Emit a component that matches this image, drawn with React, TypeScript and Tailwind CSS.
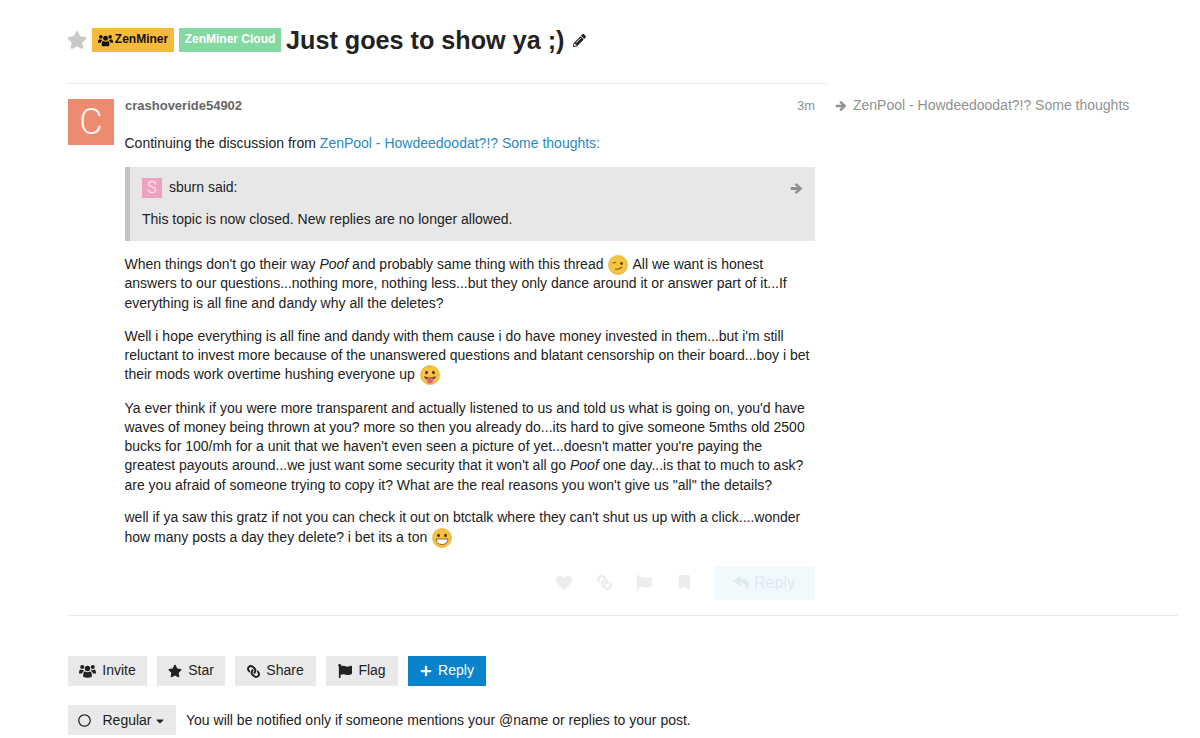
import { FaStar, FaPencilAlt, FaHeart, FaLink, FaFlag, FaBookmark, FaReply, FaPlus, FaRegCircle, FaCaretDown } from "react-icons/fa";
import type { ReactNode } from "react";

function Face({ tongue, wink, grin }: { tongue?: boolean; wink?: boolean; grin?: boolean }) {
  return (
    <svg viewBox="0 0 20 20" className="inline-block w-5 h-5 -my-1 align-[-2px] mx-[1px]">
      <circle cx="10" cy="10" r="9.5" fill="#f5c242" stroke="#d9a22c" strokeWidth="0.6" />
      {wink ? (
        <>
          <path d="M4.5 8 L8 7.5" stroke="#7a5a1e" strokeWidth="1.2" />
          <circle cx="13.5" cy="8.5" r="1.4" fill="#5a4316" />
          <path d="M7 14 Q11 15 14 12" stroke="#8a5a1e" strokeWidth="1.2" fill="none" />
        </>
      ) : (
        <>
          <ellipse cx="6.5" cy="7.5" rx="1.4" ry="1.8" fill="#4a3512" />
          <ellipse cx="13.5" cy="7.5" rx="1.4" ry="1.8" fill="#4a3512" />
        </>
      )}
      {tongue && (
        <>
          <path d="M4 11 Q10 14 16 11 Q15 15 10 15 Q5 15 4 11Z" fill="#5a3312" />
          <path d="M7 13 H13 V15.5 A3 3 0 0 1 7 15.5Z" fill="#e0607e" />
        </>
      )}
      {grin && (
        <path d="M4 11 H16 Q15.5 16.5 10 16.5 Q4.5 16.5 4 11Z" fill="#fff" stroke="#6b4a18" strokeWidth="0.8" />
      )}
    </svg>
  );
}

function UsersIcon({ className }: { className: string }) {
  return (
    <svg viewBox="0 0 20 16" className={className} fill="currentColor">
      <circle cx="10" cy="5" r="3.2" />
      <circle cx="3.8" cy="3.2" r="2.4" />
      <circle cx="16.2" cy="3.2" r="2.4" />
      <path d="M5 15.2 Q4.5 8.8 7 8.6 Q10 10.4 13 8.6 Q15.5 8.8 15 15.2 Q10 16.4 5 15.2Z" />
      <path d="M0 11 Q0 6.2 2 6.2 Q3.8 7.4 5.6 6.6 Q5.4 7.4 5.6 8 Q3.8 8.6 3.7 11Z" />
      <path d="M20 11 Q20 6.2 18 6.2 Q16.2 7.4 14.4 6.6 Q14.6 7.4 14.4 8 Q16.2 8.6 16.3 11Z" />
    </svg>
  );
}

function ArrowIcon({ className }: { className: string }) {
  return (
    <svg viewBox="0 0 14 14" className={className} fill="currentColor">
      <path d="M7 1 L13.4 7 L7 13 L5 11 L7.8 8.6 H0.8 V5.4 H7.8 L5 3 Z" />
    </svg>
  );
}

function Btn({ icon, label, className }: { icon: ReactNode; label: string; className: string }) {
  return (
    <button className={`h-[30px] flex items-center justify-center gap-[6px] text-[14px] ${className}`}>
      {icon}
      <span>{label}</span>
    </button>
  );
}

export default function App() {
  return (
    <div className="h-[738px] overflow-hidden bg-white pl-[68px] pr-[22px] pt-[25px] text-[14px] leading-[19.6px] text-[#222222] font-['Liberation_Sans',Arial,sans-serif]">
      <div className="flex items-center h-[30px] w-[759px]">
        <FaStar className="text-[#c9c9c9] text-[20px] ml-[-1px] mr-[5px]" />
        <span className="h-[24px] w-[82px] bg-[#f7bb3c] flex items-center justify-center gap-[2px] text-[12px] font-bold text-[#111111]">
          <UsersIcon className="w-[15px] h-[13px]" />
          ZenMiner
        </span>
        <span className="h-[24px] w-[102px] ml-[5px] bg-[#83d99f] flex items-center justify-center text-[12px] font-bold text-white">
          ZenMiner Cloud
        </span>
        <h1 className="ml-[5px] text-[25.2px] font-bold leading-[30px] text-[#222222]">Just goes to show ya ;)</h1>
        <FaPencilAlt className="ml-[8px] text-[13px] text-[#222222]" />
      </div>

      <div className="mt-[28px] w-[759px] border-t border-[#e9e9e9]" />

      <div className="flex mt-[15px] w-[1110px] border-b border-[#e9e9e9] h-[517px]">
        <div className="w-[46px] h-[46px] bg-[#ee8a70] text-[#fdf3ee] text-[36px] leading-[46px] text-center shrink-0 font-['Roboto',sans-serif] font-light">C</div>
        <div className="ml-[11px] w-[690px]">
          <div className="flex justify-between items-center h-[14px]">
            <span className="font-bold text-[#666666] text-[13px]">crashoveride54902</span>
            <span className="text-[13px] text-[#919191]">3m</span>
          </div>
          <p className="mt-[21px] -ml-[0.5px]">
            Continuing the discussion from <a className="text-[#2a8ac2]">ZenPool - Howdeedoodat?!? Some thoughts:</a>
          </p>
          <div className="mt-[13px] h-[74px] bg-[#e7e7e7] border-l-[5px] border-[#c4c4c4] pl-[12px] pr-[12px] pt-[11px]">
            <div className="flex items-center h-[20px]">
              <span className="w-[20px] h-[20px] bg-[#eea2c1] text-[#fdf3f6] text-[16px] leading-[20px] text-center font-['Roboto',sans-serif] font-light">S</span>
              <span className="ml-[7px] mt-[1px]">sburn said:</span>
              <ArrowIcon className="ml-auto text-[#8f8f8f] w-[13px] h-[13px] mt-[1px]" />
            </div>
            <p className="mt-[12px]">This topic is now closed. New replies are no longer allowed.</p>
          </div>
          <p className="mt-[14.5px] -ml-[0.5px] leading-[19.25px]">
            When things don't go their way <em>Poof</em> and probably same thing with this thread <Face wink /> All we want is honest answers to our questions...nothing more, nothing less...but they only dance around it or answer part of it...If everything is all fine and dandy why all the deletes?
          </p>
          <p className="mt-[14px] -ml-[0.5px] leading-[19.25px]">
            Well i hope everything is all fine and dandy with them cause i do have money invested in them...but i'm still reluctant to invest more because of the unanswered questions and blatant censorship on their board...boy i bet their mods work overtime hushing everyone up <Face tongue />
          </p>
          <p className="mt-[14px] -ml-[0.5px] leading-[19.25px]">
            Ya ever think if you were more transparent and actually listened to us and told us what is going on, you'd have waves of money being thrown at you? more so then you already do...its hard to give someone 5mths old 2500 bucks for 100/mh for a unit that we haven't even seen a picture of yet...doesn't matter you're paying the greatest payouts around...we just want some security that it won't all go <em>Poof</em> one day...is that to much to ask? are you afraid of someone trying to copy it? What are the real reasons you won't give us "all" the details?
          </p>
          <p className="mt-[13.5px] -ml-[0.5px] leading-[19.25px]">
            well if ya saw this gratz if not you can check it out on btctalk where they can't shut us up with a click....wonder how many posts a day they delete? i bet its a ton <Face grin />
          </p>
          <div className="mt-[19px] flex items-center justify-end h-[34px] text-[#ececec] text-[15px]">
            <FaHeart className="mr-[25px] text-[16px]" />
            <FaLink className="mr-[24px] -scale-x-100" />
            <FaFlag className="mr-[25px] text-[16px]" />
            <FaBookmark className="mr-[22px] text-[15px]" />
            <span className="w-[101px] h-[34px] bg-[#f2f9fd] flex items-center justify-center gap-[5px] text-[#dbe9f3] text-[16px]">
              <FaReply className="text-[15px]" />
              Reply
            </span>
          </div>
        </div>
        <div className="ml-[20px] -mt-[3px] flex items-start gap-[6px] text-[#919191]">
          <ArrowIcon className="w-[12px] h-[12px] mt-[4px]" />
          <span>ZenPool - Howdeedoodat?!? Some thoughts</span>
        </div>
      </div>

      <div className="mt-[40px] flex gap-[10px]">
        <Btn icon={<UsersIcon className="w-[17px] h-[14px]" />} label="Invite" className="w-[79px] bg-[#e9e9e9] text-[#222222]" />
        <Btn icon={<FaStar className="text-[14px]" />} label="Star" className="w-[68px] bg-[#e9e9e9] text-[#222222]" />
        <Btn icon={<FaLink className="text-[13px] -scale-x-100" />} label="Share" className="w-[81px] bg-[#e9e9e9] text-[#222222]" />
        <Btn icon={<FaFlag className="text-[14px]" />} label="Flag" className="w-[72px] bg-[#e9e9e9] text-[#222222]" />
        <Btn icon={<FaPlus className="text-[12px]" />} label="Reply" className="w-[78px] bg-[#0a83cc] text-white" />
      </div>

      <div className="mt-[19px] flex items-center">
        <button className="h-[30px] w-[108px] bg-[#e9e9e9] flex items-center justify-center gap-[11px]">
          <FaRegCircle className="text-[13px]" />
          <span className="flex items-center gap-[2px] mt-[1px]">Regular <FaCaretDown className="text-[12px]" /></span>
        </button>
        <span className="ml-[10px] mt-[1px]">You will be notified only if someone mentions your @name or replies to your post.</span>
      </div>
    </div>
  );
}
